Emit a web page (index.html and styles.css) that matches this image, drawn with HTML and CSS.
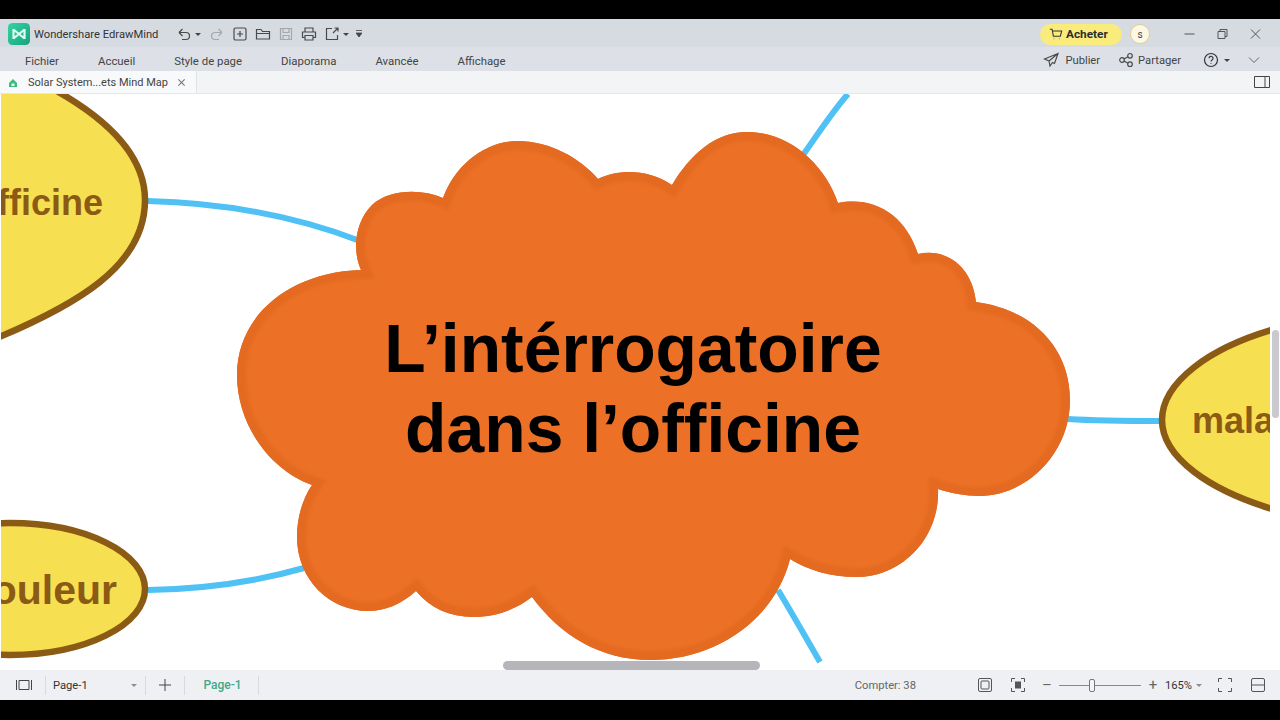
FILE: index.html
```html
<!DOCTYPE html>
<html lang="fr">
<head>
  <meta charset="UTF-8">
  <title>Wondershare EdrawMind</title>
  <link rel="stylesheet" href="styles.css">
</head>
<body>
  <div class="app">

    <div class="titlebar">
      <svg class="logo" viewBox="0 0 22 22">
        <defs>
          <linearGradient id="logoGrad" x1="0" y1="0" x2="1" y2="1">
            <stop offset="0" stop-color="#35d3a0"/>
            <stop offset="1" stop-color="#17a37f"/>
          </linearGradient>
        </defs>
        <rect width="22" height="22" rx="4.5" fill="url(#logoGrad)"/>
        <path d="M5.5 6v10M16.500 6v10M5.500 6.500L11 11l5.500-4.500M5.500 15.500L11 11l5.500 4.500" fill="none" stroke="#dffbf0" stroke-width="2.200" stroke-linejoin="round"/>
      </svg>
      <span class="app-name">Wondershare EdrawMind</span>

      <div class="quick">
        <div class="with-caret">
          <svg class="ico" viewBox="0 0 16 16"><path d="M3 6.500h7a3.500 3.500 0 0 1 0 7H6M3 6.500l3.500-3.500M3 6.500L6.500 10"/></svg>
          <span class="caret"></span>
        </div>
        <svg class="ico off" viewBox="0 0 16 16"><path d="M13 6.500H6a3.500 3.500 0 0 0 0 7h4M13 6.500L9.500 3M13 6.500L9.500 10"/></svg>
        <svg class="ico" viewBox="0 0 16 16"><rect x="2" y="2" width="12" height="12" rx="1.500"/><path d="M8 5v6M5 8h6"/></svg>
        <svg class="ico" viewBox="0 0 16 16"><path d="M1.500 13V3.500h4.500l1.500 2h7V13zM1.500 7.500h13"/></svg>
        <svg class="ico off" viewBox="0 0 16 16"><path d="M2.500 2.500h11v11h-11zM5 2.500v4h6v-4M5 13.500v-4h6v4"/></svg>
        <svg class="ico" viewBox="0 0 16 16"><path d="M4 6V2h8v4M4 11.500H1.500V6h13v5.500H12M4 9.500h8v4.500H4z"/></svg>
        <div class="with-caret">
          <svg class="ico" viewBox="0 0 16 16"><path d="M13.500 9v4.500h-11v-11H8M9 7l5-5M10.500 2H14v3.500"/></svg>
          <span class="caret"></span>
        </div>
        <svg class="more" viewBox="0 0 6 8"><path d="M0 0.500h6M0 3h6L3 7z" fill="#444" stroke="#444" stroke-width="0.800"/></svg>
      </div>

      <div class="title-right">
        <div class="buy">
          <svg class="ico cart" viewBox="0 0 16 16"><path d="M1 2.500h2.500L5 10.500h8l1.500-6H4M5.500 13.500h.5M12 13.500h.5"/></svg>
          Acheter
        </div>
        <div class="avatar">s</div>
        <div class="win-buttons">
          <svg class="win" viewBox="0 0 12 12"><path d="M1 6h10"/></svg>
          <svg class="win" viewBox="0 0 12 12"><path d="M1.500 3.500h7v7h-7zM3.500 3.500v-2h7v7h-2"/></svg>
          <svg class="win" viewBox="0 0 12 12"><path d="M1.500 1.500l9 9M10.500 1.500l-9 9"/></svg>
        </div>
      </div>
    </div>

    <div class="menubar">
      <a class="menu-item">Fichier</a>
      <a class="menu-item">Accueil</a>
      <a class="menu-item">Style de page</a>
      <a class="menu-item">Diaporama</a>
      <a class="menu-item">Avancée</a>
      <a class="menu-item">Affichage</a>

      <div class="menu-right">
        <div class="action">
          <svg class="ico" viewBox="0 0 16 16"><path d="M15 1.500L1.500 7l4.500 2 1 5 2.500-3.500 2 1zM15 1.500L6 9"/></svg>
          <span>Publier</span>
        </div>
        <div class="action share">
          <svg class="ico" viewBox="0 0 16 16"><circle cx="4" cy="8" r="2.300"/><circle cx="12" cy="3.800" r="2.300"/><circle cx="12" cy="12.200" r="2.300"/><path d="M6 7l4-2.200M6 9l4 2.200"/></svg>
          <span>Partager</span>
        </div>
        <div class="with-caret help">
          <svg class="ico dark" viewBox="0 0 16 16"><circle cx="8" cy="8" r="6.500"/><path d="M6 6.300a2 2 0 1 1 3 1.700c-.7.400-1 .800-1 1.600M8 11.300v.8"/></svg>
          <span class="caret"></span>
        </div>
        <svg class="ico chevron" viewBox="0 0 16 16"><path d="M3 5.500l5 5 5-5"/></svg>
      </div>
    </div>

    <div class="tabbar">
      <div class="tab">
        <svg class="tab-icon" viewBox="0 0 10 10"><path d="M1 5l4-4 4 4v4H1z" fill="#3dbb7d"/><rect x="3.500" y="5.500" width="3" height="2.500" fill="#e9f7ef"/></svg>
        <span class="tab-name">Solar System...ets Mind Map</span>
        <svg class="tab-close" viewBox="0 0 10 10"><path d="M1.500 1.500l7 7M8.500 1.500l-7 7"/></svg>
      </div>
      <svg class="panel-toggle" viewBox="0 0 16 12"><path d="M.500.500h15v11H.500zM11 .500v11"/></svg>
    </div>

    <div class="canvas">
      <svg class="map" viewBox="0 94 1280 576">
        <defs>
          <path id="cloud" d="M361 270C352 250 355 222 372 205C388 190 420 188 443 198C455 165 485 141 517 141C550 141 580 158 598 179C620 168 650 170 672 185C690 155 715 132 747 132C790 132 825 165 838 203C875 196 905 215 918 254C945 248 972 265 976 302C1035 310 1070 350 1070 400C1070 455 1025 496 980 496C965 496 950 493 938 489C940 540 900 577 857 577C830 577 808 570 790 559C775 620 715 660 650 660C600 660 560 635 532 597C515 610 495 617 473 617C450 617 430 608 416 591C400 605 385 611 368 611C330 611 297 580 297 537C297 518 302 500 312 485C270 470 237 425 237 375C237 315 290 272 361 270Z"/>
          <clipPath id="cloudClip"><use href="#cloud"/></clipPath>
          <clipPath id="sheet"><rect x="1" y="94" width="1269" height="576"/></clipPath>
        </defs>

        <g class="links">
          <path d="M148 201C230 203 300 218 360 241"/>
          <path d="M148 590C205 589 255 582 304 568"/>
          <path d="M1068 419C1100 421 1130 421 1162 421"/>
          <path d="M803 155C818 134 832 112 848 94"/>
          <path d="M778 590C792 613 806 638 820 662"/>
        </g>

        <g clip-path="url(#sheet)">
          <path class="node" d="M-20 345C80 305 145 265 145 200C145 155 105 118 55 90L-20 90Z"/>
          <ellipse class="node" cx="10" cy="589" rx="135" ry="66"/>
          <path class="node" d="M1290 325C1205 346 1162 385 1162 420C1162 455 1205 492 1290 514Z"/>
          <text class="node-label" x="103" y="215" text-anchor="end">fficine</text>
          <text class="node-label big" x="117" y="604" text-anchor="end">ouleur</text>
          <text class="node-label" x="1192" y="433">mala</text>
        </g>

        <use href="#cloud" class="cloud-fill"/>
        <g clip-path="url(#cloudClip)">
          <use href="#cloud" class="cloud-rim"/>
        </g>
        <text class="topic" x="633" y="372">L’intérrogatoire</text>
        <text class="topic" x="633" y="452">dans l’officine</text>
      </svg>
      <div class="scroll-x"></div>
      <div class="scroll-y"></div>
    </div>

    <div class="statusbar">
      <svg class="st-panel" viewBox="0 0 16 10"><path d="M.500 0v10M15.500 0v10M3 .500h10v9H3z"/></svg>
      <span class="divider first"></span>
      <div class="page-select"><span>Page-1</span><span class="caret light"></span></div>
      <span class="divider"></span>
      <svg class="st-plus" viewBox="0 0 12 12"><path d="M6 0v12M0 6h12"/></svg>
      <span class="divider"></span>
      <span class="page-tab">Page-1</span>
      <span class="divider"></span>

      <div class="status-right">
        <span class="count">Compter: 38</span>
        <svg class="st-ico" viewBox="0 0 14 14"><rect x=".500" y=".500" width="13" height="13" rx="1.500"/><rect x="3" y="3" width="8" height="8" rx="1"/></svg>
        <svg class="st-ico" viewBox="0 0 14 14"><path d="M.500 4V.500H4M10 .500h3.500V4M13.500 10v3.500H10M4 13.500H.500V10"/><rect x="4" y="3.500" width="6" height="7" fill="#555" stroke="none"/></svg>
        <div class="zoom">
          <span class="zoom-sign">–</span>
          <div class="slider"><span class="thumb"></span></div>
          <span class="zoom-sign">+</span>
        </div>
        <span class="percent">165%</span>
        <span class="caret light"></span>
        <svg class="st-ico full" viewBox="0 0 14 14"><path d="M.500 4V.500H4M10 .500h3.500V4M13.500 10v3.500H10M4 13.500H.500V10"/></svg>
        <svg class="st-ico last" viewBox="0 0 14 14"><rect x=".500" y=".500" width="13" height="13" rx="1.500"/><path d="M.500 7h13"/></svg>
      </div>
    </div>

  </div>
</body>
</html>
```

FILE: styles.css
```css
html, body {
  height: 100%;
}

body {
  margin: 0;
  background-color: #000;
  font-family: Roboto, "Noto Sans", sans-serif;
  font-size: 11.200px;
  color: #444;
  overflow: hidden;
}

.app {
  height: 681px;
  margin-top: 19px;
  display: flex;
  flex-direction: column;
  background-color: #fff;
}

/* top of window */
.titlebar {
  height: 28px;
  box-sizing: border-box;
  flex-shrink: 0;
  display: flex;
  align-items: center;
  padding-left: 8px;
  padding-top: 2px;
  background-color: #d6dbe2;
}

.logo {
  width: 22px;
  height: 22px;
}

.app-name {
  margin-left: 4px;
  color: #333;
  white-space: nowrap;
}

.ico {
  width: 16px;
  height: 16px;
  fill: none;
  stroke: #4a4a4a;
  stroke-width: 1.200;
  flex-shrink: 0;
}

.ico.off {
  stroke: #a4a8ae;
}

.ico.dark {
  stroke: #333;
}

.quick {
  display: flex;
  align-items: center;
  gap: 7px;
  margin-left: 18px;
}

.with-caret {
  display: flex;
  align-items: center;
  gap: 3px;
}

.with-caret:first-child {
  margin-right: 1px;
}

.caret {
  width: 0;
  height: 0;
  border-left: 3px solid transparent;
  border-right: 3px solid transparent;
  border-top: 3px solid #444;
}

.caret.light {
  border-top-color: #8a8d92;
}

.more {
  width: 6px;
  height: 8px;
}

.title-right {
  margin-left: auto;
  display: flex;
  align-items: center;
  padding-right: 8px;
}

.buy {
  width: 82px;
  height: 21px;
  box-sizing: border-box;
  display: flex;
  align-items: center;
  gap: 3px;
  padding-left: 9px;
  border-radius: 11px;
  background-color: #f9ec7c;
  color: #2c2c2c;
  font-size: 11.800px;
  font-weight: 700;
}

.ico.cart {
  width: 14px;
  height: 14px;
  stroke: #333;
}

.avatar {
  width: 18px;
  height: 18px;
  margin-left: 8px;
  margin-right: 23px;
  display: flex;
  align-items: center;
  justify-content: center;
  border: 1px solid #dccf96;
  border-radius: 50%;
  background-color: #fdf8e4;
  font-size: 10px;
}

.win-buttons {
  display: flex;
}

.win {
  width: 12px;
  height: 12px;
  padding: 0 10.500px;
  fill: none;
  stroke: #555;
  stroke-width: 1;
}

.menubar {
  height: 24px;
  box-sizing: border-box;
  flex-shrink: 0;
  display: flex;
  align-items: center;
  gap: 39px;
  padding-left: 25px;
  padding-right: 18px;
  padding-top: 4px;
  background-color: #dde1e7;
}

.menu-item {
  font-size: 11.400px;
  white-space: nowrap;
}

.menu-right {
  margin-left: auto;
  display: flex;
  align-items: center;
  gap: 20px;
  margin-top: -2px;
}

.action {
  display: flex;
  align-items: center;
  gap: 6px;
}

.action:first-child {
  margin-right: -2px;
}

.action.share {
  gap: 4px;
}

.help {
  margin-left: 2px;
  gap: 5px;
}

.ico.chevron {
  margin-left: -4px;
  stroke: #666;
  stroke-width: 1;
}

/* tabs */
.tabbar {
  height: 23px;
  flex-shrink: 0;
  display: flex;
  align-items: center;
  justify-content: space-between;
  padding-right: 10px;
  background-color: #f3f4f6;
  border-bottom: 1px solid #e6e7ea;
  box-sizing: border-box;
}

.tab {
  width: 197px;
  height: 100%;
  box-sizing: border-box;
  display: flex;
  align-items: center;
  padding-left: 8px;
  padding-top: 1px;
  background-color: #f8f9fa;
  border-right: 1px solid #e2e3e6;
}

.tab-icon {
  width: 10px;
  height: 10px;
}

.tab-name {
  margin-left: 10px;
  font-size: 11px;
  white-space: nowrap;
}

.tab-close {
  width: 9px;
  height: 9px;
  margin-left: auto;
  margin-right: 10px;
  fill: none;
  stroke: #777;
  stroke-width: 1.200;
}

.panel-toggle {
  width: 16px;
  height: 12px;
  fill: none;
  stroke: #444;
}

/* mind map */
.canvas {
  position: relative;
  flex: 1;
  overflow: hidden;
  background-color: #fff;
}

.map {
  display: block;
  width: 1280px;
  height: 576px;
}

.links path {
  fill: none;
  stroke: #4fc1f5;
  stroke-width: 6;
}

.node {
  fill: #f6df50;
  stroke: #8b5a14;
  stroke-width: 6.500;
}

.node-label {
  font-family: "Liberation Sans", sans-serif;
  font-weight: 700;
  font-size: 36px;
  fill: #8b5a14;
}

.node-label.big {
  font-size: 41px;
}

.cloud-fill {
  fill: #ec7126;
}

.cloud-rim {
  fill: none;
  stroke: #e36a20;
  stroke-width: 18;
  filter: blur(1.500px);
}

.topic {
  font-family: "Liberation Sans", sans-serif;
  font-weight: 700;
  font-size: 67.800px;
  text-anchor: middle;
  fill: #000;
}

.scroll-x {
  position: absolute;
  left: 503px;
  bottom: 0;
  width: 257px;
  height: 9px;
  border-radius: 5px;
  background-color: #b6b6ba;
}

.scroll-y {
  position: absolute;
  right: 1px;
  top: 236px;
  width: 7px;
  height: 88px;
  border-radius: 4px;
  background-color: #c9c9ce;
}

/* bottom of window */
.statusbar {
  height: 30px;
  flex-shrink: 0;
  display: flex;
  align-items: center;
  padding-left: 16px;
  padding-right: 15px;
  background-color: #eef0f4;
}

.st-panel {
  width: 16px;
  height: 10px;
  fill: none;
  stroke: #444;
}

.divider {
  width: 1px;
  height: 19px;
  background-color: #d8dae0;
}

.divider.first {
  margin-left: 13px;
}

.page-select {
  width: 99px;
  height: 100%;
  box-sizing: border-box;
  display: flex;
  align-items: center;
  justify-content: space-between;
  padding-left: 7px;
  padding-right: 8px;
  color: #333;
}

.st-plus {
  width: 12px;
  height: 12px;
  margin: 0 13px;
  fill: none;
  stroke: #444;
}

.page-tab {
  width: 73px;
  padding-left: 2px;
  box-sizing: border-box;
  text-align: center;
  font-size: 12px;
  font-weight: 500;
  color: #3fa98a;
}

.status-right {
  margin-left: auto;
  display: flex;
  align-items: center;
}

.count {
  margin-right: 62px;
  color: #666;
}

.st-ico {
  width: 14px;
  height: 14px;
  fill: none;
  stroke: #555;
  margin-right: 19px;
}

.zoom {
  display: flex;
  align-items: center;
  gap: 7px;
  margin-right: 7px;
  margin-left: -2px;
}

.zoom-sign {
  width: 10px;
  text-align: center;
  font-size: 15px;
  line-height: 15px;
  color: #666;
}

.slider {
  position: relative;
  width: 82px;
  height: 1px;
  background-color: #888;
}

.thumb {
  position: absolute;
  left: 30px;
  top: -6px;
  width: 4px;
  height: 11px;
  border: 1px solid #777;
  border-radius: 2px;
  background-color: #f4f5f7;
}

.percent {
  margin-right: 4px;
  color: #333;
}

.st-ico.full {
  margin-left: 16px;
}

.st-ico.last {
  margin-right: 0;
}
```
